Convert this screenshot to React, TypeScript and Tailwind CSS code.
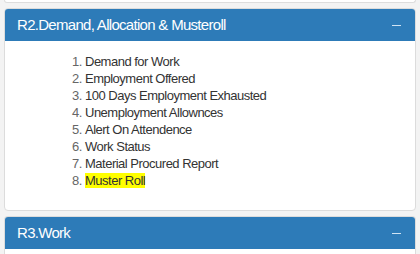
const items = [
  'Demand for Work',
  'Employment Offered',
  '100 Days Employment Exhausted',
  'Unemployment Allownces',
  'Alert On Attendence',
  'Work Status',
  'Material Procured Report',
  'Muster Roll',
]

export default function App() {
  return (
    <div
      className="min-h-screen bg-[#f3f3f3] px-1 text-[#333]"
      style={{ fontFamily: '"Liberation Sans", Arial, sans-serif' }}
    >
      <div className="h-[3px] rounded-b border border-t-0 border-[#ddd] bg-white" />

      <div className="mt-[5px] overflow-hidden rounded border border-[#dcdcdc] bg-white">
        <div className="flex h-8 items-center justify-between bg-[#2d7bb8] pl-3 pr-[14px] text-white">
          <span className="text-[15px] tracking-[-0.7px]">R2.Demand, Allocation &amp; Musteroll</span>
          <span className="h-px w-[9px] bg-[#cfe3f3]" />
        </div>
        <div className="pb-[21px] pt-[12px]">
          <ol className="list-decimal pl-[80px] text-[13px] leading-[17px] tracking-[-0.5px] marker:text-[#666]">
            {items.map((it, i) => (
              <li key={it}>
                {i === items.length - 1 ? <span className="bg-[#ffff00]">{it}</span> : it}
              </li>
            ))}
          </ol>
        </div>
      </div>

      <div className="mt-[5px] overflow-hidden rounded-t border border-b-0 border-[#dcdcdc] bg-white">
        <div className="flex h-8 items-center justify-between bg-[#2d7bb8] pl-3 pr-[14px] text-white">
          <span className="text-[15px] tracking-[-0.7px]">R3.Work</span>
          <span className="h-px w-[9px] bg-[#cfe3f3]" />
        </div>
        <div className="h-4 bg-white" />
      </div>
    </div>
  )
}
